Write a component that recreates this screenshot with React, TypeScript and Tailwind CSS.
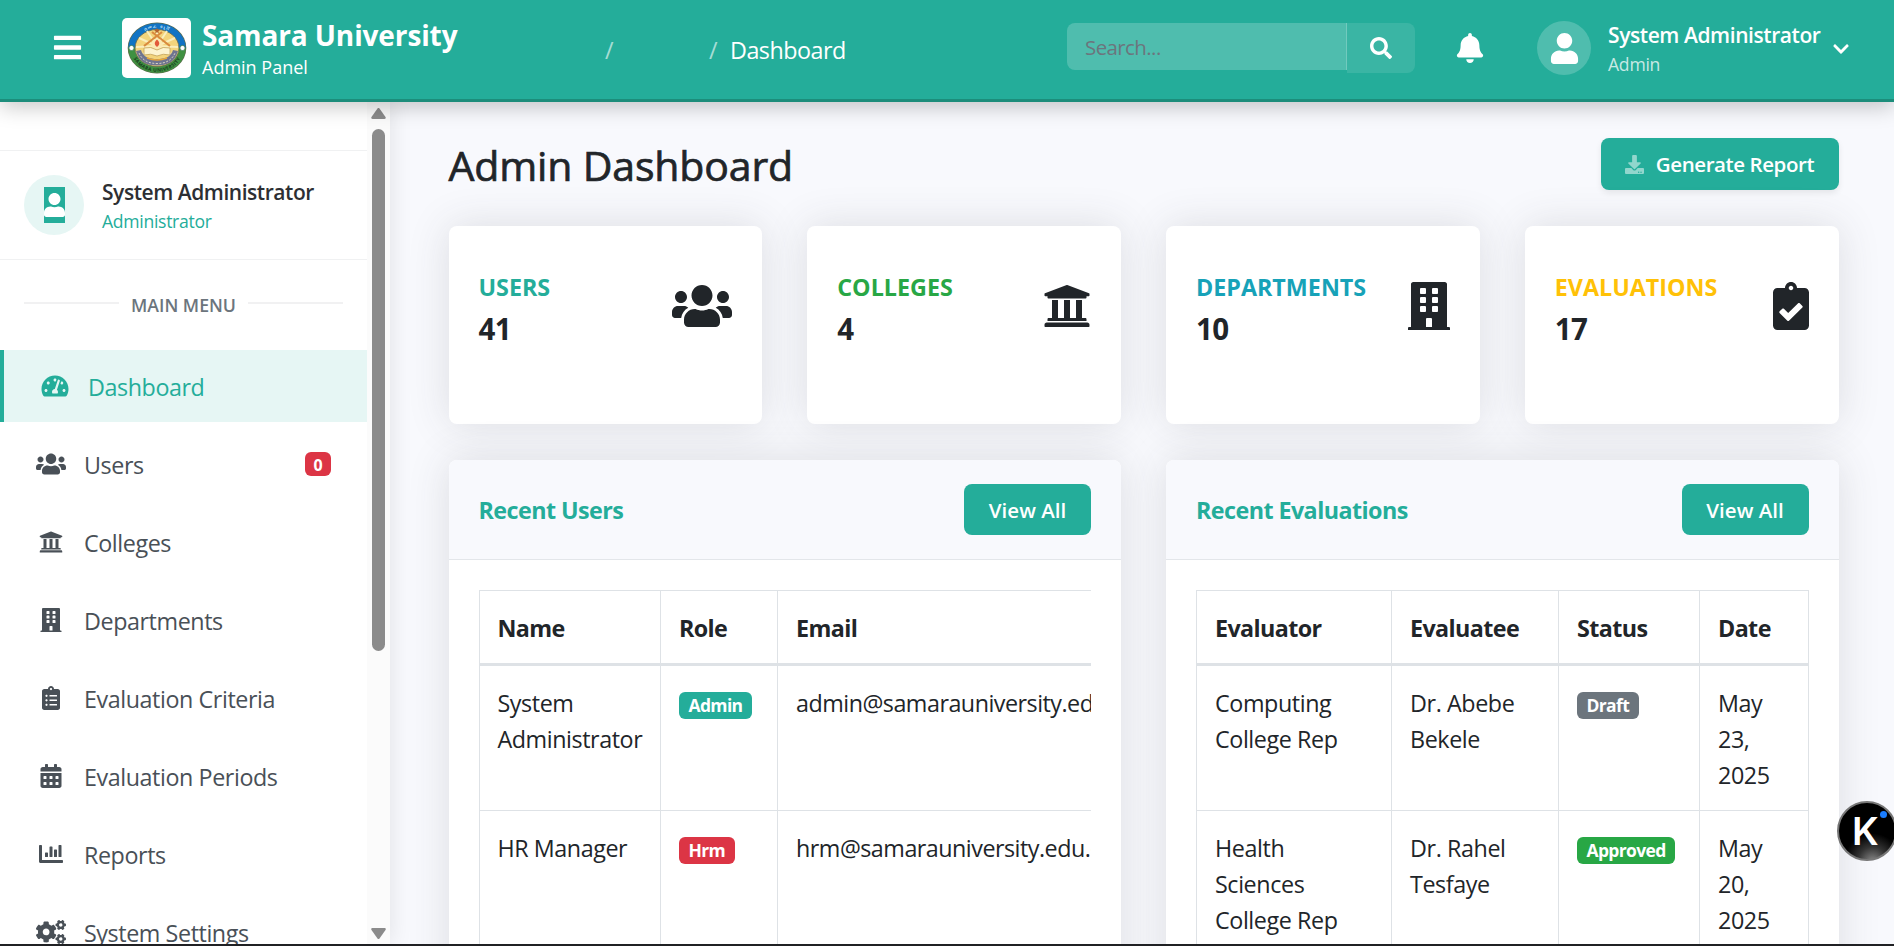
import type { ReactNode } from "react";
import type { IconType } from "react-icons";
import {
  FaBars,
  FaBell,
  FaBuilding,
  FaCalendarAlt,
  FaChartBar,
  FaChevronDown,
  FaClipboardCheck,
  FaClipboardList,
  FaCogs,
  FaDownload,
  FaSearch,
  FaTachometerAlt,
  FaUniversity,
  FaUser,
  FaUsers,
} from "react-icons/fa";

function Crest() {
  return (
    <svg viewBox="0 0 60 52" className="h-[52px] w-[60px]">
      <ellipse cx="30" cy="26" rx="29.3" ry="25.4" fill="#5d6b4a" />
      <path d="M1.3 26a28.7 24.8 0 0 1 57.4 0z" fill="#1173c4" />
      <path d="M1.3 26a28.7 24.8 0 0 0 57.4 0z" fill="#3f9142" />
      <ellipse cx="30" cy="26" rx="22" ry="18.500" fill="#f3d47c" stroke="#6b6a4c" strokeWidth=".8" />
      <g stroke="#fbeebd" strokeWidth="2">
        <path d="M30 24 30 8M30 24 20 9M30 24 40 9M30 24 12 16M30 24 48 16M30 24 9 25M30 24 51 25M30 24 12 34M30 24 48 34" />
      </g>
      <g stroke="#d98a3e" strokeWidth="2.200" fill="none">
        <path d="M35 10 17 24M25 10l18 14" />
      </g>
      <path d="m30 6 .9 1.8 2 .2-1.5 1.3.4 2L30 10.300l-1.800 1 .4-2L27.100 8l2-.2z" fill="#b4622c" />
      <circle cx="30" cy="22" r="5.500" fill="#fbe9b4" />
      <path d="M30 17.500c3 3 3 5 0 7.500-3-2.500-3-4.500 0-7.500z" fill="#e2593a" />
      <path d="M17 26q7-2 13 2 6-4 13-2v7q-7-2-13 1-6-3-13-1z" fill="#fdf3cf" stroke="#c3a25a" strokeWidth=".8" />
      <path d="M9 29c3 11 11 14.500 21 14.500s18-3.500 21-14.500l-5-1c-2 7-8 9-16 9s-14-2-16-9z" fill="#6f7490" />
      <path d="M12 31c3 7 9 10.500 18 10.500s15-3.500 18-10.500" fill="none" stroke="#d9d3c2" strokeWidth="1" strokeDasharray="2 1.500" />
      <path d="M20 36q10 4 20 0" fill="none" stroke="#e6a63c" strokeWidth="1.500" />
      <circle cx="4.500" cy="26" r="2.600" fill="#fff" stroke="#3a7c52" strokeWidth=".8" />
      <circle cx="55.500" cy="26" r="2.600" fill="#fff" stroke="#3a7c52" strokeWidth=".8" />
      <path id="crest-top" d="M8.500 22C14 .500 46 .500 51.500 22" fill="none" />
      <path id="crest-bottom" d="M4.500 31C11 56 49 56 55.500 31" fill="none" />
      <text fontSize="4.600" fontWeight="700" fill="#bfe0f5" letterSpacing="1.100" textAnchor="middle">
        <textPath href="#crest-top" startOffset="50%">ሰመራ ዩኒቨ</textPath>
      </text>
      <text fontSize="4.800" fontWeight="700" fill="#173a1b" letterSpacing=".4" textAnchor="middle">
        <textPath href="#crest-bottom" startOffset="50%">SAMARA UNIVERSITY</textPath>
      </text>
    </svg>
  );
}

function Header() {
  return (
    <header className="relative z-20 flex h-[102px] shrink-0 items-start border-b-[3px] border-[#1c8d7b] bg-[#24ad9a] text-white shadow-[0_5px_20px_rgba(0,0,0,0.22)] *:shrink-0">
      <FaBars className="mt-8 ml-[52px] size-[31px]" />
      <div className="mt-[18px] ml-[39px] flex h-[60px] w-[69px] items-center justify-center rounded-[5px] bg-white">
        <Crest />
      </div>
      <div className="mt-[18px] ml-[11px] w-[403px]">
        <div className="h-[35px] text-[28px] leading-[35px] font-bold tracking-[-0.12px]">Samara University</div>
        <div className="mt-[1px] text-[18px] leading-[27px]">Admin Panel</div>
      </div>
      <div className="mt-8 flex h-9 w-[462px] text-[23.300px] leading-9 tracking-[-0.5px]">
        <span className="w-[104px] text-white/60">/</span>
        <span className="w-[22px] text-white/60">/</span>
        <span className="-ml-px">Dashboard</span>
      </div>
      <div className="mt-[23px] flex w-[348px] items-start">
        <div className="h-[47px] w-[280px] rounded-l-[8px] border-r border-white/20 bg-white/20 px-[18px] text-[20.500px] leading-[49px] tracking-[-0.6px] text-[#6c757d]">
          Search...
        </div>
        <div className="flex h-[50px] w-[68px] items-center justify-center rounded-r-[8px] bg-white/10">
          <FaSearch className="size-[22px]" />
        </div>
      </div>
      <FaBell className="mt-[33px] ml-[40px] size-[30px]" />
      <div className="mt-[21px] ml-[52px] flex size-[54px] items-center justify-center rounded-full bg-white/20">
        <FaUser className="size-[31px]" />
      </div>
      <div className="mt-[19px] ml-[17px] w-[224px] whitespace-nowrap">
        <div className="h-8 text-[21px] leading-8 font-semibold tracking-[-0.42px]">System Administrator</div>
        <div className="text-[17.600px] leading-[27px] tracking-[-0.25px] text-white/75">Admin</div>
      </div>
      <FaChevronDown className="mt-[40px] size-[18px]" />
    </header>
  );
}

type NavItem = { label: string; icon: IconType; size: string; badge?: string; active?: boolean };

const NAV: NavItem[] = [
  { label: "Dashboard", icon: FaTachometerAlt, size: "h-6 w-[28px]", active: true },
  { label: "Users", icon: FaUsers, size: "h-6 w-[30px]", badge: "0" },
  { label: "Colleges", icon: FaUniversity, size: "h-6 w-6" },
  { label: "Departments", icon: FaBuilding, size: "h-6 w-6" },
  { label: "Evaluation Criteria", icon: FaClipboardList, size: "h-6 w-6" },
  { label: "Evaluation Periods", icon: FaCalendarAlt, size: "h-6 w-6" },
  { label: "Reports", icon: FaChartBar, size: "h-6 w-6" },
  { label: "System Settings", icon: FaCogs, size: "h-6 w-[30px]" },
];

function Sidebar() {
  return (
    <aside className="relative z-10 flex w-[390px] shrink-0 bg-white shadow-[0_0_22px_rgba(0,0,0,0.1)]">
      <div className="w-[367px] shrink-0 overflow-hidden">
        <div className="h-[49px] border-b border-[#f0f1f2]" />
        <div className="flex h-[109px] items-center gap-[18px] border-b border-[#f0f1f2] px-6">
          <div className="flex size-[60px] items-center justify-center rounded-full bg-[#e6f6f4]">
            <div className="flex h-9 w-[21px] items-center justify-center bg-[#24ad9a] text-white">
              <FaUser className="h-6 w-[21px]" />
            </div>
          </div>
          <div className="pt-1">
            <div className="h-[30px] text-[21px] leading-[30px] font-semibold tracking-[-0.45px] text-[#2d2f33]">
              System Administrator
            </div>
            <div className="h-[30px] text-[17.600px] leading-[29px] tracking-[-0.3px] text-[#24ad9a]">Administrator</div>
          </div>
        </div>
        <div className="flex h-[90px] items-center px-6">
          <div className="-mt-1 h-[2px] flex-1 bg-[#f1f1f2]" />
          <div className="w-[129px] text-center text-[17.700px] leading-[27px] font-semibold text-[#6c757d]">MAIN MENU</div>
          <div className="-mt-1 h-[2px] flex-1 bg-[#f1f1f2]" />
        </div>
        <nav className="flex flex-col gap-[6px]">
          {NAV.map(({ label, icon: Icon, size, badge, active }) => (
            <div
              key={label}
              className={
                active
                  ? "flex h-[72px] shrink-0 items-center border-l-4 border-[#24ad9a] bg-[#e6f6f4] pr-9 pl-9 text-[#24ad9a]"
                  : "flex h-[72px] shrink-0 items-center pr-9 pl-9 text-[#495057]"
              }
            >
              <span className="flex w-[30px] shrink-0 justify-center">
                <Icon className={size} />
              </span>
              <span className="ml-[18px] pt-[2px] text-[23.300px] leading-9 tracking-[-0.42px]">{label}</span>
              {badge && (
                <span className="ml-auto flex h-6 w-[26px] items-center justify-center rounded-[6px] bg-[#dc3545] pt-px text-[16px] font-bold text-white">
                  {badge}
                </span>
              )}
            </div>
          ))}
        </nav>
      </div>
      <div className="flex w-[23px] flex-col items-center bg-[#fbfbfb]">
        <svg viewBox="0 0 15 11" className="mt-[6px] h-[11px] w-[15px] fill-[#8b8b8b]">
          <path d="M6.300.7a1.500 1.500 0 0 1 2.400 0l5.800 8.300c.6.900.2 2-1 2h-12c-1.200 0-1.600-1.100-1-2z" />
        </svg>
        <div className="mt-[10px] h-[522px] w-[13px] rounded-full bg-[#8b8b8b]" />
        <svg viewBox="0 0 15 11" className="mt-auto mb-[5px] h-[11px] w-[15px] rotate-180 fill-[#8b8b8b]">
          <path d="M6.300.7a1.500 1.500 0 0 1 2.400 0l5.800 8.300c.6.900.2 2-1 2h-12c-1.200 0-1.600-1.100-1-2z" />
        </svg>
      </div>
    </aside>
  );
}

const STATS: { label: string; value: string; color: string; icon: IconType; width: string }[] = [
  { label: "USERS", value: "41", color: "text-[#24ad9a]", icon: FaUsers, width: "w-[60px]" },
  { label: "COLLEGES", value: "4", color: "text-[#28a745]", icon: FaUniversity, width: "w-[48px]" },
  { label: "DEPARTMENTS", value: "10", color: "text-[#17a2b8]", icon: FaBuilding, width: "w-[42px]" },
  { label: "EVALUATIONS", value: "17", color: "text-[#ffc107]", icon: FaClipboardCheck, width: "w-[36px]" },
];

function Panel({ title, children }: { title: string; children: ReactNode }) {
  return (
    <section className="w-[672.500px] shrink-0 rounded-[8px] bg-white shadow-[0_0_42px_rgba(58,59,69,0.15)]">
      <div className="flex h-[100px] items-center justify-between rounded-t-[8px] border-b border-[#e3e6ea] bg-[#f8f9fd] px-[30px]">
        <h2 className="pt-[2px] text-[23.300px] font-bold tracking-[-0.56px] text-[#24ad9a]">{title}</h2>
        <div className="flex h-[51px] w-[127px] items-center justify-center rounded-[8px] bg-[#24ad9a] pt-px text-[20.500px] font-semibold text-white">
          View All
        </div>
      </div>
      <div className="mx-[30px] mt-[30px] overflow-hidden">{children}</div>
    </section>
  );
}

function Badge({ color, children }: { color: string; children: ReactNode }) {
  return (
    <span
      className={`mt-[8px] inline-flex h-[27px] items-center rounded-[6px] px-[9.500px] text-[17.500px] leading-[27px] font-bold tracking-[-0.65px] text-white ${color}`}
    >
      {children}
    </span>
  );
}

const TH =
  "h-[76px] border-t border-b-[3px] border-l border-[#dee2e6] px-[18px] pt-[19px] pb-[17px] text-left leading-9 font-bold tracking-[-0.6px]";
const TD = "h-[145px] border-b border-l border-[#dee2e6] pt-[19px] pr-[14px] pb-[17px] pl-[18px] align-top leading-9";
const BADGE_TD = "h-[145px] border-b border-l border-[#dee2e6] px-[18px] py-[18px] align-top leading-none";

function UsersTable() {
  const rows = [
    { name: "System Administrator", role: "Admin", color: "bg-[#24ad9a]", email: "admin@samarauniversity.edu.et" },
    { name: "HR Manager", role: "Hrm", color: "bg-[#dc3545]", email: "hrm@samarauniversity.edu.et" },
  ];
  return (
    <table className="w-[700px] table-fixed border-separate border-spacing-0 text-[23.300px] tracking-[-0.43px]">
      <colgroup>
        <col className="w-[181.500px]" />
        <col className="w-[117px]" />
        <col />
      </colgroup>
      <thead>
        <tr>
          <th className={TH}>Name</th>
          <th className={TH}>Role</th>
          <th className={TH}>Email</th>
        </tr>
      </thead>
      <tbody>
        {rows.map((r) => (
          <tr key={r.name}>
            <td className={TD}>{r.name}</td>
            <td className={BADGE_TD}>
              <Badge color={r.color}>{r.role}</Badge>
            </td>
            <td className={`${TD} whitespace-nowrap tracking-[-0.5px]`}>{r.email}</td>
          </tr>
        ))}
      </tbody>
    </table>
  );
}

function EvaluationsTable() {
  const rows = [
    { from: "Computing College Rep", to: "Dr. Abebe Bekele", status: "Draft", color: "bg-[#6c757d]", date: "May 23, 2025" },
    { from: "Health Sciences College Rep", to: "Dr. Rahel Tesfaye", status: "Approved", color: "bg-[#28a745]", date: "May 20, 2025" },
  ];
  return (
    <table className="w-full table-fixed border-separate border-spacing-0 border-r border-[#dee2e6] text-[23.300px] tracking-[-0.4px]">
      <colgroup>
        <col className="w-[195px]" />
        <col className="w-[167px]" />
        <col className="w-[141px]" />
        <col />
      </colgroup>
      <thead>
        <tr>
          <th className={TH}>Evaluator</th>
          <th className={TH}>Evaluatee</th>
          <th className={TH}>Status</th>
          <th className={TH}>Date</th>
        </tr>
      </thead>
      <tbody>
        {rows.map((r) => (
          <tr key={r.from}>
            <td className={TD}>
              <div className="w-[145px]">{r.from}</div>
            </td>
            <td className={TD}>{r.to}</td>
            <td className={BADGE_TD}>
              <Badge color={r.color}>{r.status}</Badge>
            </td>
            <td className={TD}>
              <div className="w-[62px]">{r.date}</div>
            </td>
          </tr>
        ))}
      </tbody>
    </table>
  );
}

export default function App() {
  return (
    <div className="relative flex h-[946px] w-[1894px] flex-col overflow-hidden border-b-2 border-[#202124] bg-[#f8f9fd] font-['Open_Sans','Noto_Sans',sans-serif] text-[#212529]">
      <Header />
      <div className="flex min-h-0 flex-1">
        <Sidebar />
        <main className="min-w-0 flex-1 pt-9 pr-[55.500px] pl-[58.500px]">
          <div className="flex h-[52px] items-center justify-between">
            <h1 className="pt-px text-[41px] leading-[50px] tracking-[-0.15px] [-webkit-text-stroke:0.700px_#212529]">Admin Dashboard</h1>
            <div className="flex h-[52px] w-[238px] items-center justify-center gap-3 rounded-[8px] bg-[#24ad9a] text-[20.500px] font-semibold tracking-[-0.42px] text-white shadow-[0_3px_6px_rgba(0,0,0,0.08)]">
              <FaDownload className="mt-px size-[19px] text-white/50" />
              <span className="pt-px">Generate Report</span>
            </div>
          </div>
          <div className="mt-9 grid grid-cols-4 gap-[45px]">
            {STATS.map(({ label, value, color, icon: Icon, width }) => (
              <div key={label} className="h-[198px] rounded-[8px] bg-white px-[30px] pt-[42px] shadow-[0_0_42px_rgba(58,59,69,0.15)]">
                <div className="flex h-[76px] items-center justify-between">
                  <div className="pt-1">
                    <div className={`h-9 text-[23.300px] leading-9 font-bold ${color}`}>{label}</div>
                    <div className="mt-[6px] h-9 text-[29.500px] leading-9 font-bold tracking-[-0.5px]">{value}</div>
                  </div>
                  <Icon className={`h-12 ${width}`} />
                </div>
              </div>
            ))}
          </div>
          <div className="mt-9 flex h-[600px] gap-[45px]">
            <Panel title="Recent Users">
              <UsersTable />
            </Panel>
            <Panel title="Recent Evaluations">
              <EvaluationsTable />
            </Panel>
          </div>
        </main>
      </div>
      <div className="absolute top-[801px] left-[1837px] z-30 size-[60px] overflow-hidden rounded-full border-2 border-[#777] bg-black bg-[radial-gradient(circle_at_60%_105%,#8a8a8a_0%,#333_22%,#000_42%)]">
        <span className="absolute top-[9px] left-[13px] font-['Inter',sans-serif] text-[38px] leading-[38px] font-semibold text-white">K</span>
        <span className="absolute top-[8px] left-[41px] size-[7px] rounded-full bg-[#1a7dff]" />
      </div>
    </div>
  );
}
